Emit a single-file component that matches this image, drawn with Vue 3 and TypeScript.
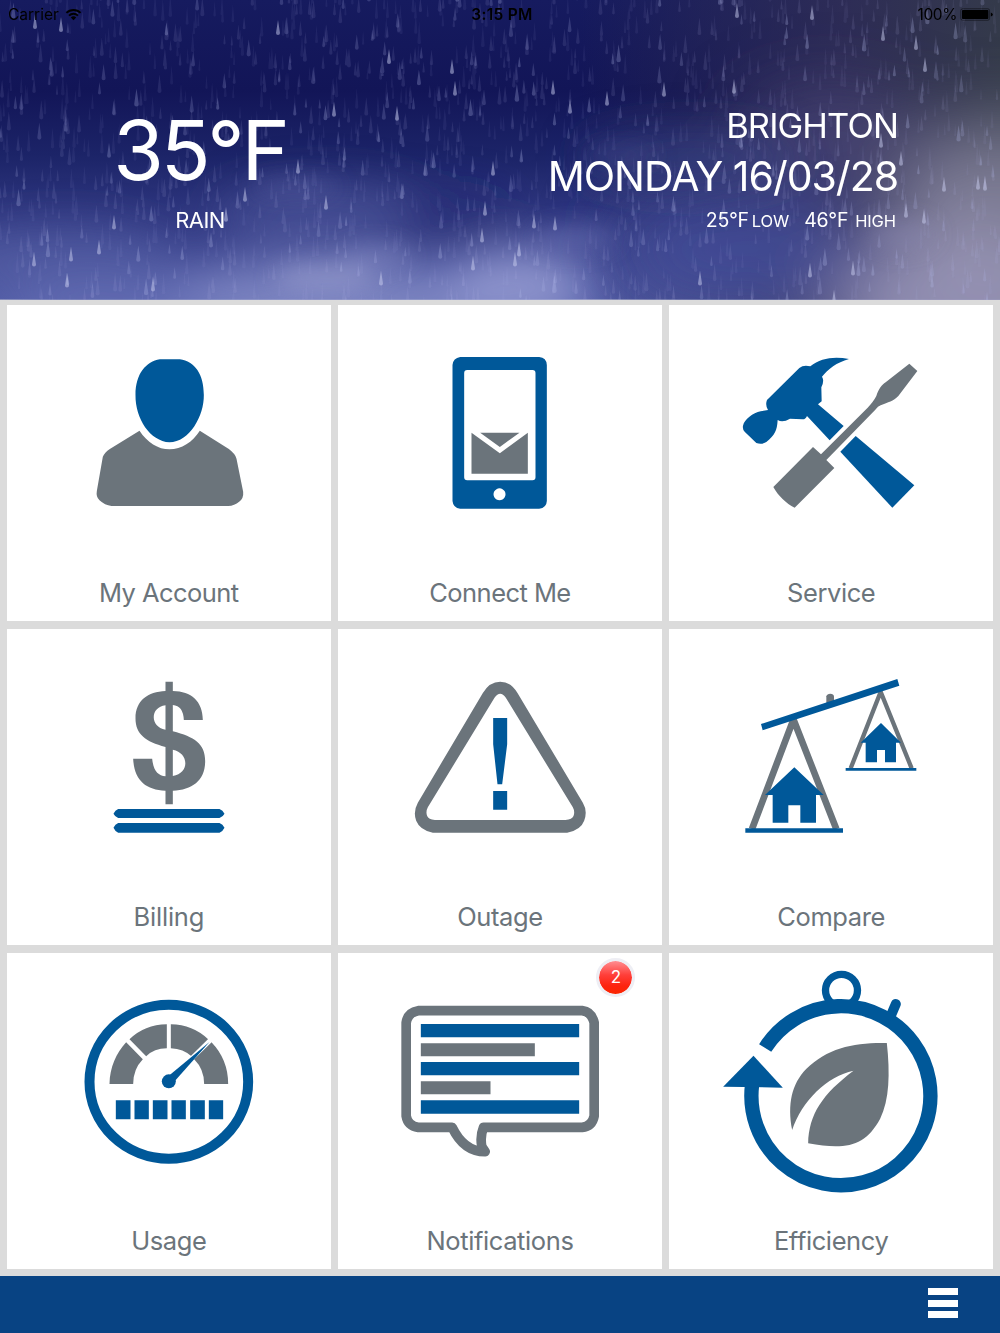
<script setup lang="ts">
interface Tile {
  id: string
  label: string
  viewBox: string
  badge?: number
}

const tiles: Tile[] = [
  { id: 'account', label: 'My Account', viewBox: '-218.5 -105 974 795' },
  { id: 'connect', label: 'Connect Me', viewBox: '-275.5 -105 974 795' },
  { id: 'service', label: 'Service', viewBox: '-183 -120 974 795' },
  { id: 'billing', label: 'Billing', viewBox: '-278.5 -124 974 795' },
  { id: 'outage', label: 'Outage', viewBox: '-185.5 -124 974 795' },
  { id: 'compare', label: 'Compare', viewBox: '-183 -124 974 795' },
  { id: 'usage', label: 'Usage', viewBox: '-188.5 -97 974 795' },
  { id: 'notifications', label: 'Notifications', viewBox: '-155.5 23 974 795', badge: 2 },
  { id: 'efficiency', label: 'Efficiency', viewBox: '-123.5 -21 974 795' },
]

// Seeded generator so the rain pattern is the same on every load.
let seed = 20160328
const rand = (): number => {
  seed = (seed * 1664525 + 1013904223) % 4294967296
  return seed / 4294967296
}

// A drop is a thin tapered tail that ends in a round belly at (x, y).
const drop = (x: number, y: number, w: number, h: number): string => {
  const f = (n: number) => n.toFixed(1)
  return `M${f(x)} ${f(y - h)}Q${f(x + w * 0.7)} ${f(y - h * 0.4)} ${f(x + w)} ${f(y - w)}Q${f(x + w)} ${f(y)} ${f(x)} ${f(y)}Q${f(x - w)} ${f(y)} ${f(x - w)} ${f(y - w)}Q${f(x - w * 0.7)} ${f(y - h * 0.4)} ${f(x)} ${f(y - h)}Z`
}

const layers = [
  { count: 1000, opacity: 0.07, w: 1.4, h: 18 },
  { count: 560, opacity: 0.12, w: 1.6, h: 15 },
  { count: 240, opacity: 0.2, w: 1.7, h: 14 },
  { count: 70, opacity: 0.28, w: 1.8, h: 14 },
].map((l) => {
  let d = ''
  for (let i = 0; i < l.count; i++) {
    const s = 0.7 + rand() * 0.6
    d += drop(rand() * 1000, rand() * 312, l.w * s, l.h * s)
  }
  return { d, opacity: l.opacity }
})

const brightSpots: [number, number][] = [
  [334, 117], [389, 64], [455, 96], [452, 74], [397, 121], [570, 114], [553, 95], [607, 106],
  [734, 94], [664, 97], [737, 18], [812, 20], [916, 50], [925, 72], [245, 202], [326, 210],
  [99, 255], [114, 230], [34, 267], [381, 286], [493, 176], [534, 229], [555, 231], [519, 257],
  [515, 267], [810, 278], [853, 276], [700, 286], [834, 305], [881, 148], [944, 192], [978, 190],
  [985, 191], [924, 224], [906, 218], [473, 271], [71, 262], [226, 222], [61, 32], [35, 29],
  [67, 288], [153, 292], [485, 216], [482, 243], [298, 174], [278, 35], [883, 41], [901, 166],
]
const brightDrops = brightSpots.map(([x, y]) => drop(x, y, 2, 15)).join('')
</script>

<template>
  <main class="screen">
    <header class="weather">
      <svg class="sky" viewBox="0 0 1000 300" preserveAspectRatio="none" aria-hidden="true">
        <defs>
          <linearGradient id="base" x1="0" y1="0" x2="0" y2="1">
            <stop offset="0" stop-color="#161b5f" />
            <stop offset="0.3" stop-color="#121557" />
            <stop offset="0.52" stop-color="#1c2468" />
            <stop offset="0.75" stop-color="#333b84" />
            <stop offset="1" stop-color="#505aa5" />
          </linearGradient>
          <linearGradient id="dusk" x1="0" y1="0" x2="1" y2="0">
            <stop offset="0.58" stop-color="#33304f" stop-opacity="0" />
            <stop offset="0.84" stop-color="#353254" stop-opacity="0.75" />
            <stop offset="1" stop-color="#343a4a" stop-opacity="1" />
          </linearGradient>
          <filter id="wide" x="-100%" y="-100%" width="300%" height="300%">
            <feGaussianBlur stdDeviation="36" />
          </filter>
          <filter id="soft" x="-100%" y="-100%" width="300%" height="300%">
            <feGaussianBlur stdDeviation="22" />
          </filter>
          <filter id="mist" x="-100%" y="-100%" width="300%" height="300%">
            <feGaussianBlur stdDeviation="11" />
          </filter>
          <filter id="fine"><feGaussianBlur stdDeviation="0.55" /></filter>
        </defs>
        <rect width="1000" height="300" fill="url(#base)" />
        <rect width="1000" height="300" fill="url(#dusk)" />
        <g filter="url(#wide)">
          <ellipse cx="1000" cy="205" rx="110" ry="85" fill="#8c8aa2" opacity="0.8" />
          <ellipse cx="960" cy="310" rx="130" ry="80" fill="#a09cc0" opacity="0.85" />
          <ellipse cx="740" cy="250" rx="130" ry="60" fill="#4450a0" opacity="0.75" />
          <ellipse cx="830" cy="135" rx="90" ry="40" fill="#544f80" opacity="0.7" />
        </g>
        <g filter="url(#soft)">
          <ellipse cx="60" cy="262" rx="120" ry="34" fill="#5d66ab" opacity="0.55" />
          <ellipse cx="325" cy="215" rx="110" ry="32" fill="#555ea3" opacity="0.55" />
          <ellipse cx="330" cy="302" rx="170" ry="42" fill="#8a92ca" opacity="0.75" />
          <ellipse cx="120" cy="312" rx="110" ry="25" fill="#6b74b8" opacity="0.7" />
          <ellipse cx="450" cy="215" rx="60" ry="20" fill="#1f2770" opacity="0.6" />
          <ellipse cx="520" cy="288" rx="70" ry="38" fill="#989ed4" opacity="0.85" />
          <ellipse cx="690" cy="158" rx="110" ry="26" fill="#3b4286" opacity="0.6" />
        </g>
        <g filter="url(#mist)">
          <ellipse cx="325" cy="278" rx="50" ry="14" fill="#9aa1d0" opacity="0.55" />
          <ellipse cx="375" cy="257" rx="35" ry="12" fill="#858cc6" opacity="0.45" />
          <ellipse cx="295" cy="187" rx="45" ry="11" fill="#626aad" opacity="0.3" />
          <ellipse cx="575" cy="238" rx="42" ry="12" fill="#7077b8" opacity="0.45" />
          <ellipse cx="900" cy="235" rx="35" ry="14" fill="#8b89b3" opacity="0.4" />
          <ellipse cx="620" cy="155" rx="38" ry="9" fill="#4c5494" opacity="0.35" />
        </g>
        <g fill="#b3b9ea" filter="url(#fine)">
          <path v-for="(l, i) in layers" :key="i" :d="l.d" :opacity="l.opacity" />
          <path :d="brightDrops" fill="#c9cdf0" opacity="0.5" />
        </g>
      </svg>

      <div class="status">
        <span class="carrier">
          Carrier
          <svg width="17" height="13" viewBox="0 0 17 13">
            <path d="M1.4 4.9a10.2 10.2 0 0 1 14.2 0M4 7.6a6.5 6.5 0 0 1 9 0" fill="none" stroke="#000" stroke-width="1.9" />
            <path d="M5.8 9.5a4 4 0 0 1 5.400 0L8.500 12.300z" />
          </svg>
        </span>
        <span class="clock">3:15 PM</span>
        <span class="power">
          <span>100%</span>
          <svg width="33" height="13" viewBox="0 0 33 13">
            <rect x="0.8" y="0.8" width="28.8" height="11.4" rx="1.8" fill="none" stroke="#000" stroke-opacity="0.6" stroke-width="0.8" />
            <rect x="2" y="2" width="26.4" height="9" rx="0.8" />
            <path d="M30.8 4.4q2 .7 2 2.1t-2 2.1z" />
          </svg>
        </span>
      </div>

      <div class="reading">
        <div class="now">
          <div class="temp">35°F</div>
          <div class="sky-text">RAIN</div>
        </div>
        <div class="place">
          <div class="city">BRIGHTON</div>
          <div class="date">MONDAY 16/03/28</div>
          <div class="range">
            <span class="deg">25°F</span><span class="unit low">LOW</span>
            <span class="deg high-deg">46°F</span><span class="unit high">HIGH</span>
          </div>
        </div>
      </div>
    </header>

    <section class="tiles">
      <article v-for="tile in tiles" :key="tile.id" class="tile">
        <svg class="icon" :viewBox="tile.viewBox" aria-hidden="true">
          <g v-if="tile.id === 'account'">
            <path class="b" d="M240 58H300C345 65 372 102 372 165C373 228 329 306 269 307C211 304 166 236 167 165C167 101 199 65 240 58Z" />
            <path class="g" d="M179 272C202 307 235 328 269 328C305 328 338 306 360 272L447 327Q467 342 470 356L490 455Q492 475 478 485Q464 497 445 498H95Q75 496 59 481Q48 471 51 453L69 350Q74 338 90 327Z" />
          </g>
          <g v-else-if="tile.id === 'connect'">
            <path class="b" fill-rule="evenodd" d="M91 51H328Q350 53 351 75V483Q350 504 328 506H91Q70 504 68 483V75Q70 54 91 51ZM112 90Q103 90 103 99V412Q103 421 112 421H308Q317 421 317 412V99Q317 90 308 90ZM209 445a18 18 0 1 0 .1 0Z" />
            <path class="g" d="M125 278L210 340L294 278V401H125ZM151 278H269L210 321Z" />
          </g>
          <g v-else-if="tile.id === 'service'">
            <path class="b" d="M39 242C43 223 69 204 92 199L114 195Q105 180 111 165L208 69Q221 58 241 64C272 39 312 33 357 42C320 52 294 73 276 95Q284 107 274 127L275 169L264 178L341 243L299 286L231 213Q226 224 217 223L180 221Q158 234 143 225C141 257 135 270 109 291Q95 300 79 294L44 260Q37 253 39 242Z" />
            <path class="b" d="M377 273L553 421L487 488L331 320Z" />
            <path class="g" d="M538 56L562 78L505 153C490 169 475 171 452 181Q444 184 436 194L289 345L313 369L194 488C168 475 145 453 130 426L249 306L273 328L413 188Q431 169 439 153C447 130 455 120 467 112Z" />
          </g>
          <g v-else-if="tile.id === 'billing'">
            <path class="g" fill-rule="evenodd" d="M197 34H219V62C275 63 308 92 309 149H252Q250 106 219 104V183C284 200 316 220 316 272C316 331 277 359 219 361V402H197V361C137 359 103 329 100 265H157C161 304 175 315 197 318V230C137 214 107 192 107 144C107 91 144 64 197 62ZM197 105C151 110 149 169 197 178ZM219 238V317C271 308 267 247 219 238Z" />
            <path class="b" d="M55 416H359Q369 420 374 430Q369 440 359 443H55Q46 440 41 430Q46 420 55 416ZM55 458H359Q369 462 374 472Q369 483 359 487H55Q46 483 41 472Q46 461 55 458Z" />
          </g>
          <g v-else-if="tile.id === 'outage'">
            <path class="g" fill-rule="evenodd" d="M249 68Q269 34 301 34Q333 34 353 68L549 397Q564 422 553 451Q543 479 502 487H99Q60 479 49 451Q39 424 54 397ZM284 82L84 411Q77 424 82 437Q86 447 105 449H497Q517 447 521 437Q526 424 519 411L318 82Q301 58 284 82Z" />
            <path class="b" d="M280 143H322V222L307 342H293L280 222ZM280 362H322V418H280Z" />
          </g>
          <g v-else-if="tile.id === 'compare'">
            <path class="g" d="M289 98V78Q291 70 301 70Q311 71 312 78V98Z" />
            <path d="M66 476L188 154H193L319 476" fill="none" stroke="#6b747b" stroke-width="20" />
            <path d="M362 294L451 67H453L545 294" fill="none" stroke="#6b747b" stroke-width="13" />
            <path class="b" d="M93 161L502 26L508 46L98 180ZM46 474H339V487H46ZM347 293H559V301H347Z" />
            <path class="b" d="M193 291L281 374H258V457H211V405H175V457H128V374H105ZM453 158L513 217H498V276H465V239H441V276H407V217H392Z" />
          </g>
          <g v-else-if="tile.id === 'usage'">
            <ellipse cx="297" cy="289" rx="238" ry="231" fill="none" stroke="#005899" stroke-width="30" />
            <path class="g" d="M119 296C120 247 139 203 169 171L219 222Q190 252 190 296ZM179 162Q224 118 291 117V189Q253 189 229 213ZM303 117Q369 118 415 162L365 213Q341 191 303 189ZM425 171Q475 223 475 296H403Q403 252 373 222Z" />
            <path d="M420 166L366 218" stroke="#fff" stroke-width="13" />
            <path class="b" d="M419 170L315 287L297 271Z" />
            <circle class="b" cx="297" cy="288" r="21" />
            <path class="b" d="M138 345H182V402H138ZM194 345H237V402H194ZM249 345H293V402H249ZM305 345H348V402H305ZM361 345H405V402H361ZM417 345H460V402H417Z" />
          </g>
          <g v-else-if="tile.id === 'notifications'">
            <path d="M85 196H577Q605 199 613 232V512Q607 543 577 546H281Q270 573 276 604L286 619Q222 619 187 546H85Q54 542 49 512V232Q54 201 85 196Z" fill="none" stroke="#6b747b" stroke-width="29" stroke-linejoin="round" />
            <path class="b" d="M93 236H568V276H93ZM93 350H568V390H93ZM93 465H568V505H93Z" />
            <path class="g" d="M93 294H435V333H93ZM93 408H302V447H93Z" />
          </g>
          <g v-else>
            <circle cx="394" cy="91" r="48" fill="none" stroke="#005899" stroke-width="22" />
            <path d="M165 264A268.500 268.500 0 1 1 125.500 376" fill="none" stroke="#005899" stroke-width="43" />
            <path d="M542 167L557 132" stroke="#005899" stroke-width="30" stroke-linecap="round" />
            <path class="b" d="M130 287L218 383L39 380Z" />
            <path class="g" d="M530 249C540 341 538 419 510 476C464 561 405 570 294 550C296 463 337 402 430 332C351 348 275 423 246 510C231 433 245 371 288 327C353 263 433 247 530 249Z" />
          </g>
        </svg>
        <div class="label" :class="tile.id">{{ tile.label }}</div>
        <div v-if="tile.badge" class="badge">{{ tile.badge }}</div>
      </article>
    </section>

    <footer class="bar">
      <button class="menu" aria-label="Menu"><i></i><i></i><i></i></button>
    </footer>
  </main>
</template>

<style>
body {
  margin: 0;
}
</style>

<style scoped>
.screen {
  width: 1000px;
  height: 1333px;
  display: flex;
  flex-direction: column;
  overflow: hidden;
  background: #dbdbdb;
  font-family: Inter, "Liberation Sans", sans-serif;
}
.weather {
  position: relative;
  height: 299.5px;
  flex: none;
  overflow: hidden;
  color: #fff;
}
.sky {
  position: absolute;
  inset: 0;
  width: 100%;
  height: 100%;
}
.status {
  position: relative;
  display: grid;
  grid-template-columns: 1fr auto 1fr;
  align-items: center;
  height: 28px;
  padding: 0 7px 0 8px;
  color: #000;
  font-size: 15.5px;
}
.carrier {
  display: flex;
  align-items: center;
  gap: 6px;
  letter-spacing: 0;
}
.clock {
  padding-left: 3px;
  font-weight: 600;
  letter-spacing: 0.3px;
}
.power {
  display: flex;
  align-items: center;
  justify-content: flex-end;
  gap: 3px;
  letter-spacing: -0.4px;
}
.reading {
  position: relative;
  display: flex;
  justify-content: space-between;
  padding: 73px 102px 0 100px;
}
.now {
  width: 200px;
  text-align: center;
  white-space: nowrap;
}
.temp {
  font-size: 82px;
  line-height: 99px;
  letter-spacing: -3.2px;
}
.sky-text {
  margin-top: 7px;
  font-size: 22px;
  line-height: 27px;
  letter-spacing: -0.6px;
}
.place {
  padding-top: 4px;
  text-align: right;
  white-space: nowrap;
}
.city {
  font-size: 34.5px;
  line-height: 42px;
  letter-spacing: -0.9px;
}
.date {
  margin-top: 4px;
  font-size: 41px;
  line-height: 50px;
  letter-spacing: -1px;
}
.range {
  display: flex;
  justify-content: flex-end;
  align-items: baseline;
  margin-top: 7px;
  padding-right: 2px;
  line-height: 24px;
}
.deg {
  font-size: 19.5px;
  letter-spacing: -0.3px;
}
.high-deg {
  margin-left: 15px;
}
.unit {
  font-size: 16.5px;
  letter-spacing: -0.1px;
}
.low {
  margin-left: 3px;
}
.high {
  margin-left: 7px;
}
.tiles {
  display: grid;
  grid-template-columns: repeat(3, 1fr);
  grid-auto-rows: 316px;
  column-gap: 6.5px;
  row-gap: 8px;
  padding: 5.5px 6.5px 0;
}
.tile {
  position: relative;
  display: flex;
  flex-direction: column;
  background: #fff;
}
.icon {
  width: 100%;
  height: 265px;
  flex: none;
}
.b {
  fill: #005899;
}
.g {
  fill: #6b747b;
}
.label {
  height: 46px;
  line-height: 46px;
  text-align: center;
  font-size: 25.5px;
  color: #6b747b;
  letter-spacing: -0.4px;
}
.label.account,
.label.connect {
  letter-spacing: -0.55px;
}
.label.billing {
  letter-spacing: -0.2px;
}
.badge {
  position: absolute;
  top: 5px;
  right: 27px;
  width: 33px;
  height: 33px;
  border: 3px solid #eeeef4;
  border-radius: 50%;
  background: linear-gradient(#ff8d91 0%, #ff3f3a 42%, #fd2410 75%, #fa2600 100%);
  background-clip: padding-box;
  color: #fff;
  font-size: 17px;
  line-height: 33px;
  text-align: center;
}
.bar {
  display: flex;
  justify-content: flex-end;
  align-items: flex-start;
  box-sizing: border-box;
  flex: none;
  height: 57.5px;
  margin-top: auto;
  padding: 12.5px 42px 0 0;
  background: #084383;
}
.menu {
  display: flex;
  flex-direction: column;
  gap: 4.5px;
  width: 30px;
  padding: 0;
  border: 0;
  background: none;
}
.menu i {
  height: 7px;
  background: #fff;
}
</style>
